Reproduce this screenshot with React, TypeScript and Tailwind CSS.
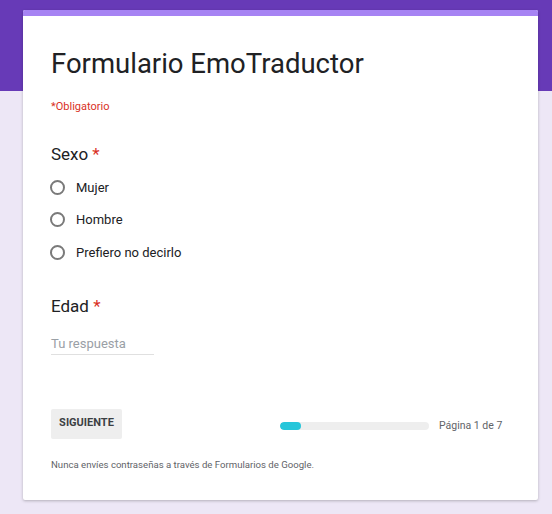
import React from "react";

const Radio = ({ label }: { label: string }) => (
  <div className="flex items-center h-[32.5px]">
    <div className="-ml-[1px] w-[15px] h-[15px] rounded-full border-2 border-[#7a7a7a]" />
    <span className="ml-[11px] text-[13px] text-[#202124]">{label}</span>
  </div>
);

export default function App() {
  return (
    <div
      className="relative w-[552px] h-[514px] bg-[#ede7f6] overflow-hidden"
      style={{ fontFamily: "Roboto, 'Liberation Sans', sans-serif" }}
    >
      <div className="absolute left-0 top-0 w-full h-[91px] bg-[#673ab7]" />
      <div className="relative pt-[10px] pl-[23px]">
        <div className="w-[515px] h-[490px] bg-white rounded-[2px] shadow-[0_1px_3px_rgba(0,0,0,0.25)] overflow-hidden">
          <div className="h-[6px] bg-[#a683f3]" />
          <div className="pl-[28px] pr-[20px]">
            <div className="mt-[30px] text-[27.5px] leading-[36px] text-[#202124]">
              Formulario EmoTraductor
            </div>
            <div className="mt-[17px] text-[11px] leading-[16px] text-[#d93025]">
              *Obligatorio
            </div>
            <div className="mt-[27px] text-[17px] leading-[24px] text-[#202124]">
              Sexo <span className="text-[#d93025]">*</span>
            </div>
            <div className="mt-[5px] flex flex-col">
              <Radio label="Mujer" />
              <Radio label="Hombre" />
              <Radio label="Prefiero no decirlo" />
            </div>
            <div className="mt-[25px] text-[17px] leading-[24px] text-[#202124]">
              Edad <span className="text-[#d93025]">*</span>
            </div>
            <div className="mt-[18px] w-[103px] border-b border-[#e0e0e0] pb-[3px]">
              <div className="text-[13px] leading-[15px] text-[#9aa0a6]">Tu respuesta</div>
            </div>
            <div className="mt-[54px] flex items-center whitespace-nowrap">
              <div className="w-[71px] h-[30px] shrink-0 bg-[#eeeeee] rounded-[2px] flex items-center justify-center text-[11px] font-bold text-[#3c4043]">
                SIGUIENTE
              </div>
              <div className="ml-[158px] mt-[4px] w-[149px] h-[8px] shrink-0 rounded-full bg-[#eeeeee] overflow-hidden">
                <div className="w-[21px] h-full rounded-full bg-[#26c6da]" />
              </div>
              <span className="ml-[10px] mt-[4px] text-[10.5px] text-[#5f6368]">Página 1 de 7</span>
            </div>
            <div className="mt-[19px] text-[9.6px] leading-[14px] text-[#5f6368]">
              Nunca envíes contraseñas a través de Formularios de Google.
            </div>
          </div>
        </div>
      </div>
    </div>
  );
}
